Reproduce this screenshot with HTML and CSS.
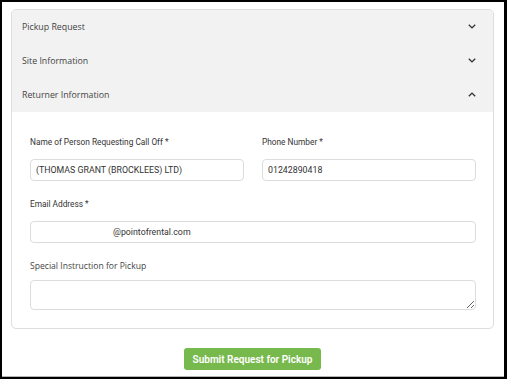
FILE: index.html
```html
<!DOCTYPE html>
<html>
<head>
<meta charset="utf-8">
<link rel="stylesheet" href="styles.css">
</head>
<body>
<div class="frame">
  <div class="screen">
    <div class="card">
      <div class="acc-head">
        <span>Pickup Request</span>
        <svg class="chev" viewBox="0 0 8 5" width="8" height="5"><path d="M0.8 0.8 L4 3.9 L7.2 0.8" fill="none" stroke="#333" stroke-width="1.4"/></svg>
      </div>
      <div class="acc-head">
        <span>Site Information</span>
        <svg class="chev" viewBox="0 0 8 5" width="8" height="5"><path d="M0.8 0.8 L4 3.9 L7.2 0.8" fill="none" stroke="#333" stroke-width="1.4"/></svg>
      </div>
      <div class="acc-head">
        <span>Returner Information</span>
        <svg class="chev" viewBox="0 0 8 5" width="8" height="5"><path d="M0.8 4.2 L4 1.1 L7.2 4.2" fill="none" stroke="#333" stroke-width="1.4"/></svg>
      </div>
      <div class="acc-body">
        <div class="row two">
          <div class="field">
            <label class="lbl">Name of Person Requesting Call Off *</label>
            <div class="input">(THOMAS GRANT (BROCKLEES) LTD)</div>
          </div>
          <div class="field">
            <label class="lbl">Phone Number *</label>
            <div class="input">01242890418</div>
          </div>
        </div>
        <div class="field">
          <label class="lbl">Email Address *</label>
          <div class="input redacted">@pointofrental.com</div>
        </div>
        <div class="field">
          <label class="lbl lbl-os">Special Instruction for Pickup</label>
          <textarea class="textarea"></textarea>
        </div>
      </div>
    </div>
    <div class="actions">
      <button class="btn">Submit Request for Pickup</button>
    </div>
  </div>
</div>
</body>
</html>
```
FILE: styles.css
```css
* { box-sizing: border-box; }
html, body { margin: 0; padding: 0; background: #000; }
.frame {
  width: 507px;
  height: 379px;
  background: #000;
  padding: 2px 3px 2px 2px;
}
.screen {
  height: 375px;
  background: #fff;
  border-bottom: 1px solid #b5b5b5;
  padding: 7px 10px 0 9px;
}
.card {
  border: 1px solid #dedede;
  border-radius: 5px;
  overflow: hidden;
}
.acc-head {
  height: 34px;
  background: #f2f2f2;
  display: flex;
  align-items: center;
  justify-content: space-between;
  padding: 0 17px 1px 10px;
  font-family: "Open Sans", sans-serif;
  font-size: 8.8px;
  color: #444;
}
.chev { display: block; }
.acc-body {
  padding: 24px 17px 18px 18px;
  display: flex;
  flex-direction: column;
  gap: 17px;
}
.row.two {
  display: grid;
  grid-template-columns: 1fr 1fr;
  column-gap: 18px;
}
.field { display: flex; flex-direction: column; }
.lbl {
  font-family: Roboto, sans-serif;
  font-size: 8.3px;
  line-height: 12px;
  color: #333;
  margin-bottom: 11px;
}
.lbl-os {
  font-family: "Open Sans", sans-serif;
  font-size: 8.6px;
  color: #444;
  margin-bottom: 8px;
}
.input {
  height: 22px;
  border: 1px solid #dcdcdc;
  border-radius: 4px;
  padding: 0 5px;
  display: flex;
  align-items: center;
  font-family: Roboto, sans-serif;
  font-size: 8.8px;
  color: #333;
}
.redacted { padding-left: 82px; }
.textarea {
  display: block;
  width: 100%;
  height: 30px;
  border: 1px solid #dcdcdc;
  border-radius: 4px;
  resize: vertical;
  margin: 0;
}
.actions {
  display: flex;
  justify-content: center;
  padding-top: 19px;
}
.btn {
  width: 137px;
  height: 22px;
  border: none;
  border-radius: 3px;
  background: #78b94d;
  color: #fff;
  font-family: Roboto, sans-serif;
  font-weight: 600;
  font-size: 10px;
  padding: 0;
}
```
